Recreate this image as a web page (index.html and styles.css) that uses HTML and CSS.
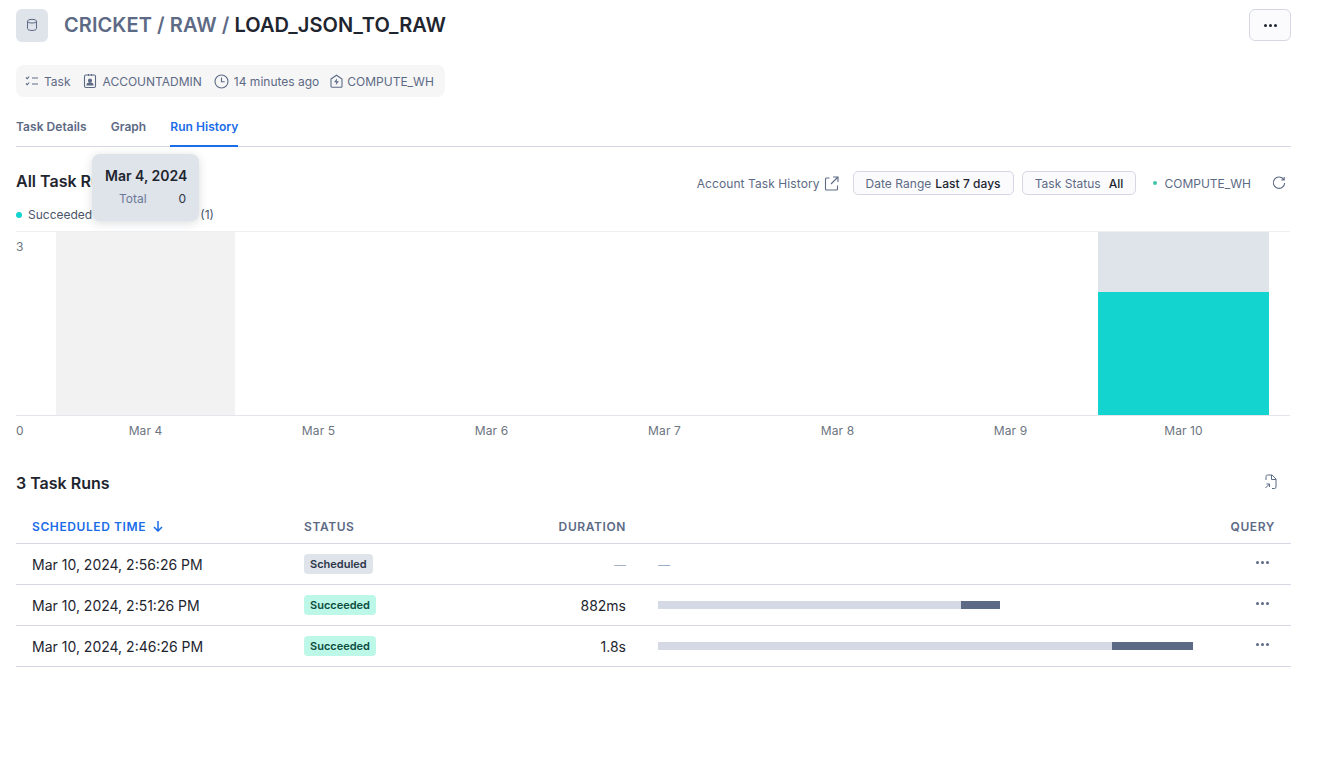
FILE: index.html
```html
<!DOCTYPE html>
<html lang="en">
<head>
  <meta charset="UTF-8">
  <title>LOAD_JSON_TO_RAW</title>
  <link rel="stylesheet" href="styles.css">
</head>
<body>
  <div id="page">
    <!-- header -->
    <div class="title-row">
      <div class="title-icon">
        <svg width="14" height="14" viewBox="0 0 14 14" fill="none" stroke="#5d6a85" stroke-width="1"><ellipse cx="7" cy="3.2" rx="4.5" ry="1.9"/><path d="M2.5 3.2v7.4c0 1.1 2 1.900 4.500 1.900s4.500-.8 4.500-1.900V3.200"/></svg>
      </div>
      <h1><span class="crumb">CRICKET / RAW / </span>LOAD_JSON_TO_RAW</h1>
      <button class="more-btn"><i></i><i></i><i></i></button>
    </div>

    <div class="meta-bar">
      <span class="meta-item">
        <svg width="14" height="14" viewBox="0 0 14 14" fill="none" stroke="#5d6a85" stroke-width="1.100"><path d="M1 3.500l1.200 1.200L4.200 2.500M1 9.500l1.200 1.200 2-2.200M7 4h6M7 10h6"/></svg>
        Task
      </span>
      <span class="meta-item person">
        <svg width="14" height="16" viewBox="0 0 14 16" fill="none" stroke="#5d6a85" stroke-width="1.100"><rect x="1.500" y="2" width="11" height="12.500" rx="1.500"/><path d="M5.500 1v2M8.500 1v2"/><circle cx="7" cy="7.500" r="1.500" fill="#5d6a85"/><path d="M4 12c.3-3 5.700-3 6 0z" fill="#5d6a85"/></svg>
        ACCOUNTADMIN
      </span>
      <span class="meta-item">
        <svg width="15" height="15" viewBox="0 0 15 15" fill="none" stroke="#5d6a85" stroke-width="1.100"><circle cx="7.500" cy="7.500" r="6.500"/><path d="M7.500 3.500v4.200h3.200"/></svg>
        14 minutes ago
      </span>
      <span class="meta-item wh-item">
        <svg width="13" height="14" viewBox="0 0 13 14" fill="none" stroke="#5d6a85" stroke-width="1.100"><path d="M1 5l5.500-3.800L12 5v7.200a1 1 0 0 1-1 1H2a1 1 0 0 1-1-1z"/><path d="M7.200 4.200L4 8.200h2.300l-.6 3L9 7.200H6.700z" fill="#5d6a85" stroke="none"/></svg>
        COMPUTE_WH
      </span>
    </div>

    <div class="tabs">
      <span class="tab">Task Details</span>
      <span class="tab">Graph</span>
      <span class="tab active">Run History</span>
    </div>

    <!-- chart section -->
    <div class="chart-head">
      <h2>All Task Runs</h2>
      <div class="filters">
        <span class="ext-link">Account Task History
          <svg width="15" height="15" viewBox="0 0 15 15" fill="none" stroke="#5d6a85" stroke-width="1.100"><path d="M5.500 2H2.500a1 1 0 0 0-1 1v10a1 1 0 0 0 1 1h10a1 1 0 0 0 1-1V9.500M9 1h5v5M14 1L7 8"/></svg>
        </span>
        <span class="pill">Date Range <b>Last 7 days</b></span>
        <span class="pill">Task Status <b class="status-val">All</b></span>
        <span class="wh"><i class="wh-dot"></i>COMPUTE_WH</span>
        <svg class="refresh" width="14" height="14" viewBox="0 0 14 14" fill="none" stroke="#5d6a85" stroke-width="1.100"><path d="M11.800 3.600A5.700 5.700 0 1 0 12.700 7M12.200 1v3h-3"/></svg>
      </div>
    </div>

    <div class="legend">
      <span class="legend-item"><i class="dot teal"></i>Succeeded (2)</span>
      <span class="legend-item"><i class="dot grey"></i>Scheduled (1)</span>
    </div>

    <div class="tooltip">
      <div class="tip-date">Mar 4, 2024</div>
      <div class="tip-row"><span class="tip-label">Total</span><span>0</span></div>
    </div>

    <div class="plot">
      <span class="y-label">3</span>
      <div class="day hovered"></div>
      <div class="day"></div>
      <div class="day"></div>
      <div class="day"></div>
      <div class="day"></div>
      <div class="day"></div>
      <div class="day bars">
        <div class="bar-sched"></div>
        <div class="bar-ok"></div>
      </div>
    </div>
    <div class="x-axis">
      <span class="y-zero">0</span>
      <span>Mar 4</span><span>Mar 5</span><span>Mar 6</span><span>Mar 7</span><span>Mar 8</span><span>Mar 9</span><span>Mar 10</span>
    </div>

    <!-- table -->
    <div class="runs-head">
      <h2>3 Task Runs</h2>
      <svg class="export" width="14" height="15" viewBox="0 0 14 15" fill="none" stroke="#5d6a85" stroke-width="1"><path d="M2 6V2.500A1.500 1.500 0 0 1 3.500 1H8l4 4v8a1.500 1.500 0 0 1-1.500 1.500H8M7.500 1v4.500H12"/><path d="M1.500 14l4-4M2.500 10h3v3"/></svg>
    </div>

    <div class="row head">
      <span class="col-time sorted">SCHEDULED TIME
        <svg width="12" height="12" viewBox="0 0 12 12" fill="none" stroke="#1a6ce7" stroke-width="1.500"><path d="M6 1v10M2 7l4 4 4-4"/></svg>
      </span>
      <span class="col-status">STATUS</span>
      <span class="col-dur">DURATION</span>
      <span class="col-bar"></span>
      <span class="col-query">QUERY</span>
    </div>
    <div class="row">
      <span class="col-time">Mar 10, 2024, 2:56:26 PM</span>
      <span class="col-status"><span class="badge sched">Scheduled</span></span>
      <span class="col-dur muted">—</span>
      <span class="col-bar bar-dash">—</span>
      <span class="col-query"><span class="dots"><i></i><i></i><i></i></span></span>
    </div>
    <div class="row">
      <span class="col-time">Mar 10, 2024, 2:51:26 PM</span>
      <span class="col-status"><span class="badge ok">Succeeded</span></span>
      <span class="col-dur">882ms</span>
      <span class="col-bar"><span class="track" style="width:303px"></span><span class="exec" style="width:39px"></span></span>
      <span class="col-query"><span class="dots"><i></i><i></i><i></i></span></span>
    </div>
    <div class="row">
      <span class="col-time">Mar 10, 2024, 2:46:26 PM</span>
      <span class="col-status"><span class="badge ok">Succeeded</span></span>
      <span class="col-dur">1.8s</span>
      <span class="col-bar"><span class="track" style="width:454px"></span><span class="exec" style="width:81px"></span></span>
      <span class="col-query"><span class="dots"><i></i><i></i><i></i></span></span>
    </div>
  </div>
</body>
</html>
```

FILE: styles.css
```css
body {
  margin: 0;
  font-family: Inter, "Liberation Sans", sans-serif;
  color: #1e252f;
  background-color: #fff;
}

#page {
  position: relative;
  width: 1275px;
  height: 763px;
  margin-left: 16px;
  overflow: hidden;
}

h1, h2 {
  margin: 0;
}

/* header */
.title-row {
  display: flex;
  align-items: center;
  height: 32px;
  margin-top: 9px;
}

.title-icon {
  display: flex;
  align-items: center;
  justify-content: center;
  width: 32px;
  height: 33px;
  border-radius: 6px;
  background-color: #dfe3ea;
}

h1 {
  flex: 1;
  margin-left: 16px;
  margin-top: -1px;
  font-size: 20px;
  font-weight: 600;
  line-height: 32px;
  letter-spacing: 0.07px;
}

.crumb {
  color: #5d6a85;
}

.more-btn {
  display: flex;
  align-items: center;
  justify-content: center;
  gap: 2px;
  width: 42px;
  height: 32px;
  padding: 0;
  background-color: #fbfbfd;
  border: 1px solid #d5d8e4;
  border-radius: 6px;
}

.more-btn i {
  width: 3px;
  height: 3px;
  border-radius: 50%;
  background-color: #1e252f;
}

.meta-bar {
  display: inline-flex;
  align-items: center;
  gap: 12px;
  height: 32px;
  margin-top: 24px;
  padding: 0 11px 0 9px;
  border-radius: 8px;
  background-color: #f6f6f7;
  font-size: 12px;
  color: #5d6a85;
}

.meta-item {
  display: flex;
  align-items: center;
  gap: 5px;
}

.person {
  gap: 6px;
}

.wh-item {
  gap: 4px;
  margin-left: -1px;
}

.tabs {
  display: flex;
  gap: 24px;
  height: 36px;
  margin-top: 13px;
  border-bottom: 1px solid #d5d8e4;
  font-size: 12px;
  font-weight: 600;
  line-height: 34px;
  letter-spacing: 0.04px;
  color: #5d6a85;
}

.tab {
  height: 37px;
}

.tab.active {
  color: #1a6ce7;
  border-bottom: 2px solid #1a6ce7;
  height: 35px;
}

/* chart */
.chart-head {
  display: flex;
  align-items: center;
  justify-content: space-between;
  height: 28px;
  margin-top: 20px;
}

h2 {
  font-size: 16px;
  font-weight: 600;
}

.filters {
  display: flex;
  align-items: center;
  margin-top: 4px;
  font-size: 12px;
  letter-spacing: 0.04px;
  color: #5d6a85;
}

.ext-link {
  display: flex;
  align-items: center;
  gap: 4px;
  margin-right: 14px;
  letter-spacing: 0.08px;
}

.pill {
  display: flex;
  align-items: center;
  gap: 4px;
  height: 22px;
  padding: 0 12px;
  margin-right: 8px;
  border: 1px solid #d5d8e4;
  border-radius: 5px;
  background-color: #fbfbfd;
}

.pill b {
  font-weight: 500;
  color: #1e252f;
}

.status-val {
  margin-left: 4px;
}

.wh {
  display: flex;
  align-items: center;
  margin-left: 9px;
  letter-spacing: 0;
}

.wh-dot {
  width: 4px;
  height: 4px;
  margin-right: 7px;
  border-radius: 50%;
  background-color: #3fc6a8;
}

.refresh {
  margin: 0 5px 0 21px;
}

.legend {
  display: flex;
  gap: 13px;
  height: 20px;
  margin-top: 10px;
  font-size: 12px;
  line-height: 20px;
  color: #4a556b;
}

.legend-item {
  display: flex;
  align-items: center;
}

.dot {
  width: 6px;
  height: 6px;
  margin-right: 6px;
  border-radius: 50%;
}

.teal {
  background-color: #14d4d0;
}

.grey {
  background-color: #dfe3ea;
}

.tooltip {
  position: absolute;
  left: 76px;
  top: 154px;
  box-sizing: border-box;
  width: 107px;
  height: 67px;
  padding: 13px 13px 0 13px;
  border-radius: 8px;
  background-color: #dfe3ea;
  box-shadow: 0 2px 10px rgba(30, 37, 47, 0.16);
}

.tip-date {
  font-size: 14px;
  font-weight: 600;
  line-height: 18px;
  white-space: nowrap;
}

.tip-row {
  display: flex;
  justify-content: space-between;
  margin-top: 6px;
  padding-left: 14px;
  font-size: 12px;
  line-height: 16px;
  color: #2c3648;
}

.tip-label {
  color: #6c7a97;
}

.plot {
  position: relative;
  display: grid;
  grid-template-columns: repeat(7, 173px);
  box-sizing: border-box;
  height: 185px;
  margin-top: 6px;
  margin-right: 1px;
  padding-left: 43px;
  border-top: 1px solid #eceef2;
  border-bottom: 1px solid #e4e6ec;
}

.y-label {
  position: absolute;
  left: 0;
  top: 7px;
  font-size: 12px;
  line-height: 15px;
  color: #6c7480;
}

.hovered {
  margin: 0 -3px;
  background-color: #f2f2f2;
}

.bars {
  display: flex;
  flex-direction: column;
  margin: 0 1px;
}

.bar-sched {
  height: 60px;
  background-color: #dfe3ea;
}

.bar-ok {
  flex: 1;
  background-color: #14d4d0;
}

.x-axis {
  position: relative;
  display: grid;
  grid-template-columns: repeat(7, 173px);
  height: 16px;
  margin-top: 7px;
  padding-left: 43px;
  font-size: 12px;
  line-height: 16px;
  letter-spacing: 0.1px;
  text-align: center;
  color: #6c7480;
}

.y-zero {
  position: absolute;
  left: 0;
  top: 0;
}

/* table */
.runs-head {
  display: flex;
  align-items: center;
  justify-content: space-between;
  height: 24px;
  margin-top: 32px;
  padding-right: 13px;
}

.export {
  margin-top: -3px;
}

.row {
  display: flex;
  align-items: center;
  height: 40px;
  border-bottom: 1px solid #d5d8e4;
  font-size: 14px;
}

.row.head {
  height: 34px;
  margin-top: 14px;
  font-size: 12px;
  font-weight: 600;
  letter-spacing: 0.6px;
  color: #5d6a85;
}

.col-time {
  display: flex;
  align-items: center;
  gap: 6px;
  width: 272px;
  padding-left: 16px;
  box-sizing: content-box;
}

.sorted {
  color: #1a6ce7;
}

.col-status {
  width: 220px;
}

.col-dur {
  width: 102px;
  text-align: right;
}

.muted {
  font-size: 12px;
  color: #a7b2c6;
}

.col-bar {
  display: flex;
  align-items: center;
  flex: 1;
  margin-left: 32px;
}

.bar-dash {
  font-size: 12px;
  color: #9bb0d0;
}

.track {
  height: 8px;
  background-color: #d5d9e5;
}

.exec {
  height: 8px;
  background-color: #5d6a85;
}

.col-query {
  display: flex;
  justify-content: flex-end;
  width: 60px;
  padding-right: 16px;
}

.badge {
  display: inline-block;
  height: 20px;
  padding: 0 6px;
  border-radius: 4px;
  font-size: 11px;
  font-weight: 600;
  line-height: 20px;
}

.sched {
  background-color: #dfe3ea;
  color: #2c3648;
}

.ok {
  background-color: #bcf7e7;
  color: #0d4d40;
}

.dots {
  display: flex;
  gap: 2px;
  margin-right: 6px;
  margin-top: -3px;
}

.dots i {
  width: 3px;
  height: 3px;
  border-radius: 50%;
  background-color: #5d6a85;
}
```
